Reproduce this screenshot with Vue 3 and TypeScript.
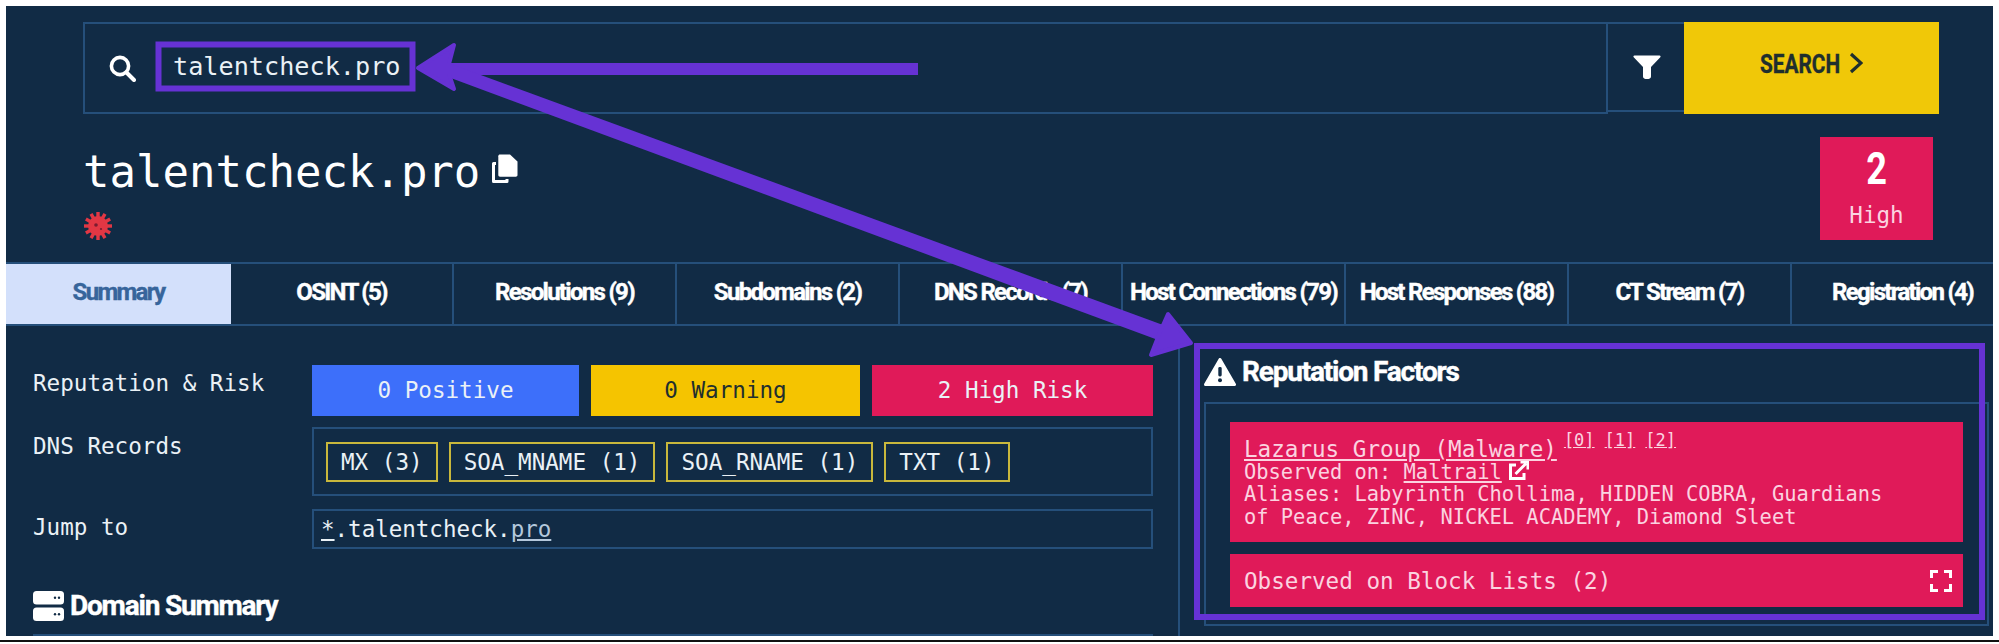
<script setup lang="ts">
const tabs = [
  'Summary',
  'OSINT (5)',
  'Resolutions (9)',
  'Subdomains (2)',
  'DNS Records (7)',
  'Host Connections (79)',
  'Host Responses (88)',
  'CT Stream (7)',
  'Registration (4)',
]
const chips = ['MX (3)', 'SOA_MNAME (1)', 'SOA_RNAME (1)', 'TXT (1)']
const spikes = [0, 30, 60, 90, 120, 150]
</script>

<template>
  <div class="page">
    <div class="panel">
      <div class="search-row">
        <div class="search-input">
          <svg class="ico-search" viewBox="0 0 27 27">
            <circle cx="11" cy="11" r="8.6" fill="none" stroke="#fff" stroke-width="3.6" />
            <path d="M17.5 17.5 25 25" stroke="#fff" stroke-width="4" stroke-linecap="round" />
          </svg>
          <span class="search-text">talentcheck.pro</span>
        </div>
        <div class="search-filter">
          <svg class="ico-filter" viewBox="0 0 28 24">
            <path d="M1.5 0.5h25c1 0 1.400 1 .8 1.800L18 12v9.500c0 2-1.800 2.500-4 2.500s-4-.5-4-2.500V12L.7 2.300C.1 1.500.5.5 1.500.5z" fill="#fff" />
          </svg>
        </div>
        <div class="search-btn">
          <span class="search-label">SEARCH</span>
          <svg class="ico-chevron" viewBox="0 0 14 22">
            <path d="M2 2l10 9-10 9" fill="none" stroke="#1f2f2e" stroke-width="3.2" />
          </svg>
        </div>
      </div>

      <div class="head">
        <div class="head-left">
          <div class="title-line">
            <h1 class="title">talentcheck.pro</h1>
            <svg class="ico-copy" viewBox="0 0 27 30">
              <path d="M5 9.5H2.5v18h13.5v-2.5" fill="none" stroke="#fff" stroke-width="3" stroke-linejoin="round" />
              <path d="M9 0.5h10l7.500 7V21c0 1-.8 1.700-1.700 1.700H9c-1 0-1.700-.7-1.700-1.700V2.200C7.300 1.200 8 .5 9 .5z" fill="#fff" />
            </svg>
          </div>
          <svg class="ico-bug" viewBox="0 0 30 30">
            <g stroke="#e23744" stroke-width="3.4">
              <line v-for="a in spikes" :key="a" x1="15" y1="1" x2="15" y2="29" :transform="`rotate(${a} 15 15)`" />
            </g>
            <circle cx="15" cy="15" r="10" fill="#e23744" />
            <circle cx="13" cy="14" r="1.800" fill="#7a1c30" />
            <circle cx="18" cy="18" r="1.100" fill="#7a1c30" />
          </svg>
        </div>
        <div class="score">
          <div class="score-num">2</div>
          <div class="score-label">High</div>
        </div>
      </div>

      <div class="tabs">
        <div v-for="(t, i) in tabs" :key="t" class="tab" :class="{ active: i === 0 }">{{ t }}</div>
      </div>

      <div class="body">
        <div class="left">
          <div class="row row-rep">
            <div class="label">Reputation &amp; Risk</div>
            <div class="risk">
              <div class="risk-item blue">0 Positive</div>
              <div class="risk-item yellow">0 Warning</div>
              <div class="risk-item red">2 High Risk</div>
            </div>
          </div>
          <div class="row row-dns">
            <div class="label">DNS Records</div>
            <div class="chips">
              <span v-for="c in chips" :key="c" class="chip">{{ c }}</span>
            </div>
          </div>
          <div class="row row-jump">
            <div class="label">Jump to</div>
            <div class="jump"><u>*</u>.talentcheck.<u class="tld">pro</u></div>
          </div>
          <div class="section-head">
            <svg class="ico-server" viewBox="0 0 31 30">
              <rect x="0" y="0" width="31" height="13.500" rx="3.500" fill="#fff" />
              <rect x="0" y="16.500" width="31" height="13.500" rx="3.500" fill="#fff" />
              <g fill="#112b45">
                <circle cx="22" cy="6.700" r="1.200" /><circle cx="26" cy="6.700" r="1.200" />
                <circle cx="22" cy="23.200" r="1.200" /><circle cx="26" cy="23.200" r="1.200" />
              </g>
            </svg>
            <h2 class="section-title">Domain Summary</h2>
          </div>
        </div>

        <div class="right">
          <div class="factors-head">
            <svg class="ico-warn" viewBox="0 0 32 28">
              <path d="M16 1.500 30.500 26.500H1.500z" fill="#fff" stroke="#fff" stroke-width="3" stroke-linejoin="round" />
              <rect x="14.300" y="9" width="3.400" height="9.500" rx="1.400" fill="#112b45" />
              <circle cx="16" cy="22.300" r="2" fill="#112b45" />
            </svg>
            <h2 class="section-title">Reputation Factors</h2>
          </div>
          <div class="factors">
            <div class="factor">
              <div class="factor-title">
                <u>Lazarus Group (Malware)</u>
                <sup class="refs"><u>[0]</u><u>[1]</u><u>[2]</u></sup>
              </div>
              <div>Observed on: <u>Maltrail</u>
                <svg class="ico-ext" viewBox="0 0 21 20">
                  <path d="M8 4H2.500v13.500H16V12" fill="none" stroke="#fff" stroke-width="3" />
                  <path d="M7.500 13 18 2.500M12.500 1H20v7.500" fill="none" stroke="#fff" stroke-width="3" />
                </svg>
              </div>
              <div>Aliases: Labyrinth Chollima, HIDDEN COBRA, Guardians<br />of Peace, ZINC, NICKEL ACADEMY, Diamond Sleet</div>
            </div>
            <div class="blocklists">
              <span>Observed on Block Lists (2)</span>
              <svg class="ico-expand" viewBox="0 0 22 22">
                <path d="M1.500 8V1.500H8M14 1.500h6.500V8M20.500 14v6.500H14M8 20.500H1.500V14" fill="none" stroke="#fff" stroke-width="3" />
              </svg>
            </div>
          </div>
        </div>
      </div>
    </div>
    <div class="rule"></div>

    <svg class="notes" viewBox="0 0 1999 644">
      <g fill="#6632d4" stroke="#6632d4">
        <rect x="158.500" y="44.500" width="254" height="44" fill="none" stroke-width="6" />
        <rect x="1197" y="346" width="785" height="271" fill="none" stroke-width="6" />
        <path d="M445 63H918V75H445z" stroke-width="0" />
        <path d="M440 60 1163 325 1158 340 440 74z" stroke-width="0" />
        <path d="M418 68 454 45 449 64V74L454 89z" stroke-width="4" stroke-linejoin="round" />
        <path d="M1191 343 1168 314 1160 332 1151 355z" stroke-width="4" stroke-linejoin="round" />
      </g>
    </svg>
  </div>
</template>

<style>
html, body {
  margin: 0;
  background: #fff;
}
</style>

<style scoped>
.page {
  position: relative;
  width: 1999px;
  height: 644px;
  overflow: hidden;
  background: #fff;
  padding-top: 6px;
  box-sizing: border-box;
  font-family: "DejaVu Sans Mono", monospace;
  color: #eaf1f6;
}
.panel {
  width: 1987px;
  height: 630px;
  margin-left: 6px;
  background: #112b45;
  overflow: hidden;
}
.rule {
  height: 2px;
  margin-top: 4px;
  background: #111;
}
.notes {
  position: absolute;
  left: 0;
  top: 0;
  width: 1999px;
  height: 644px;
  pointer-events: none;
}

.search-row {
  display: flex;
  height: 92px;
  margin: 16px 54px 0 77px;
}
.search-input {
  flex: 1;
  display: flex;
  align-items: flex-start;
  border: 2px solid #254f7a;
  padding: 31px 0 0 24px;
  box-sizing: border-box;
}
.ico-search {
  width: 27px;
  height: 27px;
  flex: none;
}
.search-text {
  margin-left: 37px;
  font-size: 25.2px;
  line-height: 23px;
}
.search-filter {
  width: 76px;
  height: 90px;
  border-top: 2px solid #254f7a;
  border-bottom: 2px solid #254f7a;
  box-sizing: border-box;
  padding: 31px 0 0 25px;
}
.ico-filter {
  display: block;
  width: 28px;
  height: 24px;
}
.search-btn {
  width: 255px;
  height: 92px;
  background: #f0c808;
  display: flex;
  align-items: flex-start;
  padding: 27px 0 0 76px;
  box-sizing: border-box;
}
.search-label {
  font-family: Roboto, sans-serif;
  font-weight: 700;
  font-size: 26px;
  line-height: 30px;
  color: #1f2f2e;
  transform: scaleX(0.8);
  transform-origin: left center;
  width: 79px;
  -webkit-text-stroke: 0.4px #1f2f2e;
}
.ico-chevron {
  width: 14px;
  height: 22px;
  margin: 3px 0 0 10px;
}

.head {
  display: flex;
  justify-content: space-between;
  height: 148px;
  padding: 23px 60px 0 77px;
  box-sizing: border-box;
}
.title-line {
  display: flex;
  align-items: flex-start;
  height: 48px;
  margin-top: 9px;
}
.title {
  margin: 0;
  font-weight: 400;
  font-size: 44px;
  line-height: 51px;
  color: #fff;
}
.ico-copy {
  width: 27px;
  height: 30px;
  margin: 8px 0 0 11px;
}
.ico-bug {
  display: block;
  width: 30px;
  height: 30px;
  margin-top: 17px;
}
.score {
  width: 113px;
  height: 103px;
  background: #e01a59;
  text-align: center;
}
.score-num {
  margin-top: 6px;
  font-family: Roboto, sans-serif;
  font-weight: 700;
  font-size: 44px;
  line-height: 52px;
  color: #fff;
  transform: scaleX(0.82);
}
.score-label {
  font-size: 22.6px;
  line-height: 28px;
  margin-top: 6px;
  color: #fbd3e0;
}

.tabs {
  display: flex;
  height: 64px;
  border-top: 2px solid #254f7a;
  border-bottom: 2px solid #254f7a;
  box-sizing: border-box;
}
.tab {
  flex: 0 0 223px;
  box-sizing: border-box;
  border-right: 2px solid #254f7a;
  display: flex;
  align-items: center;
  justify-content: center;
  padding-bottom: 5px;
  white-space: nowrap;
  font-family: Roboto, sans-serif;
  font-weight: 700;
  font-size: 24px;
  letter-spacing: -1.7px;
  color: #fff;
  -webkit-text-stroke: 0.4px #fff;
}
.tab.active {
  flex-basis: 225px;
  background: #d3e0fb;
  color: #37659b;
  border-right: none;
  -webkit-text-stroke: 0.4px #37659b;
}

.body {
  display: flex;
  height: 310px;
}
.left {
  width: 1174px;
  box-sizing: border-box;
  padding: 39px 25px 0 27px;
  border-right: 2px solid #254f7a;
  flex: none;
}
.row {
  display: flex;
}
.label {
  flex: 0 0 279px;
  font-size: 22.6px;
  line-height: 28px;
}
.row-rep .label {
  padding-top: 4px;
}
.risk {
  flex: 1;
  display: flex;
  gap: 12px;
}
.risk-item {
  height: 51px;
  padding-bottom: 2px;
  box-sizing: border-box;
  display: flex;
  align-items: center;
  justify-content: center;
  font-size: 22.6px;
}
.risk-item.blue {
  flex: 0 0 267px;
  background: #3d6ffa;
}
.risk-item.yellow {
  flex: 0 0 269px;
  background: #f5c400;
  color: #1f2f2e;
}
.risk-item.red {
  flex: 1;
  background: #e01a59;
}
.row-dns {
  margin-top: 11px;
}
.row-dns .label {
  padding-top: 5px;
}
.chips {
  flex: 1;
  height: 69px;
  border: 2px solid #254f7a;
  box-sizing: border-box;
  display: flex;
  gap: 11px;
  padding: 13px 12px;
}
.chip {
  height: 40px;
  box-sizing: border-box;
  border: 2px solid #c9b83c;
  padding: 0 13px;
  font-size: 22.6px;
  line-height: 36px;
}
.row-jump {
  margin-top: 13px;
}
.row-jump .label {
  padding-top: 4px;
}
.jump {
  flex: 1;
  height: 40px;
  border: 2px solid #254f7a;
  box-sizing: border-box;
  padding-left: 7px;
  font-size: 22.5px;
  line-height: 36px;
}
.tld {
  color: #b4c8dc;
}
.section-head {
  display: flex;
  align-items: center;
  gap: 6px;
  margin-top: 43px;
  height: 44px;
  padding-bottom: 14px;
  box-sizing: border-box;
  border-bottom: 2px solid #254f7a;
}
.section-title {
  margin: 0;
  font-family: Roboto, sans-serif;
  font-weight: 700;
  font-size: 28px;
  line-height: 30px;
  letter-spacing: -1.2px;
  color: #fff;
  -webkit-text-stroke: 0.4px #fff;
}
.ico-server {
  width: 31px;
  height: 30px;
  flex: none;
}

.right {
  flex: 1;
  padding: 31px 0 0 24px;
  min-width: 0;
}
.factors-head {
  display: flex;
  align-items: center;
  gap: 6px;
  height: 30px;
}
.ico-warn {
  width: 32px;
  height: 28px;
}
.factors {
  margin-top: 15px;
  border: 2px solid #254f7a;
  box-sizing: border-box;
  width: 785px;
  height: 224px;
  padding: 18px 24px 0 24px;
}
.factor {
  height: 120px;
  box-sizing: border-box;
  padding: 15px 14px 0;
  background: #e01a59;
  color: #fbd3e0;
  font-size: 20.4px;
  line-height: 22.4px;
}
.factor-title {
  font-size: 22.6px;
  line-height: 24px;
}
.refs {
  font-size: 17px;
  line-height: 0;
  vertical-align: 11px;
  margin-left: 7px;
}
.refs u {
  margin-right: 10px;
}
.ico-ext {
  width: 21px;
  height: 20px;
  vertical-align: -2px;
  margin-left: 6px;
}
.blocklists {
  margin-top: 12px;
  height: 53px;
  background: #e01a59;
  color: #fbd3e0;
  display: flex;
  align-items: center;
  justify-content: space-between;
  padding: 0 11px 0 14px;
  font-size: 22.6px;
}
.ico-expand {
  width: 22px;
  height: 22px;
}
</style>
